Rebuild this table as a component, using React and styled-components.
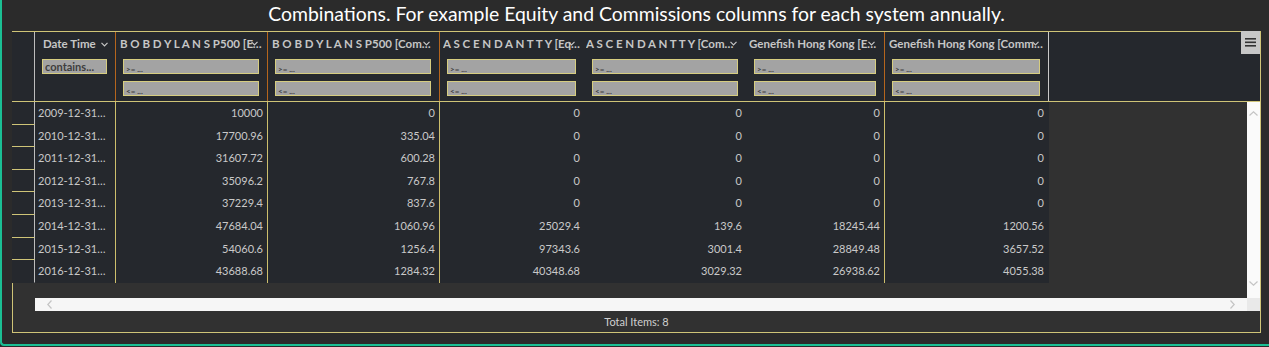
import React from "react"
import styled, { createGlobalStyle } from "styled-components"

const GlobalStyle = createGlobalStyle`
  html, body {
    margin: 0;
    padding: 0;
    background: #2b2b2b;
    font-family: Lato, "Open Sans", sans-serif;
    overflow: hidden;
  }
  * {
    box-sizing: border-box;
  }
`

const Panel = styled.div`
  width: 1269px;
  height: 346px;
  border-left: 2px solid #1bbf93;
  border-bottom: 2px solid #1bbf93;
  border-bottom-left-radius: 4px;
  background: #2b2b2b;
  padding: 0 8px 0 10px;
  display: flex;
  flex-direction: column;
`

const Title = styled.h1`
  margin: 0;
  height: 31px;
  line-height: 28px;
  font-size: 19.4px;
  font-weight: 400;
  color: #ffffff;
  text-align: center;
`

const Grid = styled.div`
  width: 1249px;
  height: 302px;
  border: 1px solid #cfc477;
  background: #313131;
  display: flex;
  flex-direction: column;
`

const HeaderRow = styled.div`
  display: flex;
  height: 70px;
  margin-left: -1px;
  background: #25282d;
  border-bottom: 1px solid #cfc477;
`

const GutterHead = styled.div`
  width: 23px;
  flex: none;
  border-right: 1px solid #bdbdbd;
`

const edgeColors = {
  orange: "#b5651d",
  light: "#c9c9c9",
  none: "transparent",
}

const HeadCell = styled.div`
  position: relative;
  width: ${(p) => p.$w}px;
  flex: none;
  border-right: 1px solid ${(p) => edgeColors[p.$edge]};
  padding: 4px 8px 0 7px;
  display: flex;
  flex-direction: column;
`

const HeadTitle = styled.div`
  height: 16px;
  line-height: 16px;
  margin-left: ${(p) => p.$shift}px;
  margin-right: -4px;
  font-size: 11.5px;
  font-weight: 700;
  color: #c6c6c6;
  white-space: nowrap;
  overflow: hidden;
  text-overflow: ${(p) => (p.$plain ? "clip" : "ellipsis")};
`

const SortMark = styled.svg`
  position: absolute;
  top: ${(p) => p.$top}px;
  right: ${(p) => p.$right}px;
  width: 7px;
  height: 5px;
`

const Filter = styled.input`
  display: block;
  width: 100%;
  height: 15px;
  margin-top: 7px;
  padding: ${(p) => (p.$text ? "0 2px" : "4px 2px 0")};
  border: 1px solid #d6cd80;
  background: #a3a3a3;
  font-family: inherit;
  font-size: ${(p) => (p.$text ? 11 : 8)}px;
  font-weight: 700;
  line-height: 1;
  color: #404040;
  outline: none;

  &::placeholder {
    color: #3e3e3e;
    opacity: 1;
  }
`

const HeadFiller = styled.div`
  flex: 1;
  display: flex;
  justify-content: flex-end;
  align-items: flex-start;
`

const MenuButton = styled.button`
  width: 19px;
  height: 23px;
  margin-top: -1px;
  border: none;
  padding: 0;
  background: #c7c7c7;
  display: flex;
  align-items: center;
  justify-content: center;
`

const Body = styled.div`
  display: grid;
  grid-template-columns: 22px 1fr 13px;
  grid-template-rows: 196px 13px;
`

const Gutter = styled.div`
  grid-row: 1 / 3;
  margin-left: -1px;
  width: 23px;
  display: flex;
  flex-direction: column;
`

const GutterCell = styled.div`
  height: 22.6px;
  flex: none;
  background: #25282d;
  border-right: 1px solid #bdbdbd;
  border-bottom: 1px solid ${(p) => (p.$last ? "#25282d" : "#cfc477")};
`

const Viewport = styled.div`
  display: flex;
  flex-direction: column;
`

const Row = styled.div`
  display: flex;
  height: 22.6px;
  flex: none;
`

const Cell = styled.div`
  width: ${(p) => p.$w}px;
  flex: none;
  background: #25282d;
  border-right: 1px solid ${(p) => (p.$line ? "#cdbf6c" : "#25282d")};
  padding: 0 ${(p) => (p.$left ? 6 : 4)}px 0 3px;
  line-height: 22px;
  font-size: 11px;
  color: #c9c9c9;
  text-align: ${(p) => (p.$left ? "left" : "right")};
  white-space: nowrap;
  overflow: hidden;
  text-overflow: ellipsis;
`

const VScroll = styled.div`
  background: #fafafa;
  display: flex;
  flex-direction: column;
  justify-content: space-between;
  align-items: center;
  padding: 9px 0 12px;
`

const HScroll = styled.div`
  background: #f6f6f6;
  display: flex;
  justify-content: space-between;
  align-items: center;
  padding: 0 12px 0 12px;
`

const Corner = styled.div`
  background: #e9e9e9;
`

const Arrow = styled.svg`
  width: ${(p) => (p.$vertical ? 9 : 5)}px;
  height: ${(p) => (p.$vertical ? 5 : 9)}px;
`

const Footer = styled.div`
  flex: 1;
  display: flex;
  align-items: center;
  justify-content: center;
  font-size: 11px;
  color: #cfcfcf;
  padding-bottom: 1px;
`

const columns = [
  { key: "date", title: "Date Time", w: 81, edge: "orange", shift: 1, left: true, line: true },
  { key: "bobEq", title: "B O B D Y L A N S P500 [Equity]", w: 152, edge: "orange", shift: -3, line: true },
  { key: "bobComm", title: "B O B D Y L A N S P500 [Commissions]", w: 172, edge: "orange", shift: -3, line: true },
  { key: "ascEq", title: "A S C E N D A N T T Y [Equity]", w: 145, edge: "none", shift: -4 },
  { key: "ascComm", title: "A S C E N D A N T T Y [Commissions]", w: 162, edge: "none", shift: -6 },
  { key: "genEq", title: "Genefish Hong Kong [Equity]", w: 138, edge: "orange", shift: -5, line: true },
  { key: "genComm", title: "Genefish Hong Kong [Commissions]", w: 164, edge: "light", shift: -3 },
]

const rows = [
  ["2009-12-31T00:00:00", "10000", "0", "0", "0", "0", "0"],
  ["2010-12-31T00:00:00", "17700.96", "335.04", "0", "0", "0", "0"],
  ["2011-12-31T00:00:00", "31607.72", "600.28", "0", "0", "0", "0"],
  ["2012-12-31T00:00:00", "35096.2", "767.8", "0", "0", "0", "0"],
  ["2013-12-31T00:00:00", "37229.4", "837.6", "0", "0", "0", "0"],
  ["2014-12-31T00:00:00", "47684.04", "1060.96", "25029.4", "139.6", "18245.44", "1200.56"],
  ["2015-12-31T00:00:00", "54060.6", "1256.4", "97343.6", "3001.4", "28849.48", "3657.52"],
  ["2016-12-31T00:00:00", "43688.68", "1284.32", "40348.68", "3029.32", "26938.62", "4055.38"],
]

function Chevron({ right, top }) {
  return (
    <SortMark $right={right} $top={top} viewBox="0 0 7 5">
      <path d="M0.5 0.8 L3.5 3.8 L6.5 0.8" fill="none" stroke="#c6c6c6" strokeWidth="1.2" />
    </SortMark>
  )
}

function ArrowIcon({ dir }) {
  const paths = {
    up: "M0.5 4.5 L4.5 0.8 L8.5 4.5",
    down: "M0.5 0.5 L4.5 4.2 L8.5 0.5",
    left: "M4.5 0.5 L0.8 4.5 L4.5 8.5",
    right: "M0.5 0.5 L4.2 4.5 L0.5 8.5",
  }
  const vertical = dir === "up" || dir === "down"
  return (
    <Arrow $vertical={vertical} viewBox={vertical ? "0 0 9 5" : "0 0 5 9"}>
      <path d={paths[dir]} fill="none" stroke="#c4c4c4" strokeWidth="1.2" />
    </Arrow>
  )
}

export default function App() {
  return (
    <>
      <GlobalStyle />
      <Panel>
        <Title>Combinations. For example Equity and Commissions columns for each system annually.</Title>
        <Grid>
          <HeaderRow>
            <GutterHead />
            {columns.map((col) =>
              col.left ? (
                <HeadCell key={col.key} $w={col.w} $edge={col.edge}>
                  <HeadTitle $plain $shift={col.shift}>
                    {col.title}
                  </HeadTitle>
                  <Chevron right={7} top={10} />
                  <Filter $text placeholder="contains..." />
                </HeadCell>
              ) : (
                <HeadCell key={col.key} $w={col.w} $edge={col.edge}>
                  <HeadTitle $shift={col.shift}>{col.title}</HeadTitle>
                  <Chevron right={9} top={9} />
                  <Filter placeholder=">= ..." />
                  <Filter placeholder="<= ..." />
                </HeadCell>
              )
            )}
            <HeadFiller>
              <MenuButton aria-label="grid menu">
                <svg width="11" height="9" viewBox="0 0 11 9">
                  <rect x="0" y="0" width="11" height="1.6" fill="#333" />
                  <rect x="0" y="3.5" width="11" height="1.6" fill="#333" />
                  <rect x="0" y="7" width="11" height="1.6" fill="#333" />
                </svg>
              </MenuButton>
            </HeadFiller>
          </HeaderRow>
          <Body>
            <Gutter>
              {rows.map((r, i) => (
                <GutterCell key={r[0]} $last={i === rows.length - 1} />
              ))}
            </Gutter>
            <Viewport>
              {rows.map((r) => (
                <Row key={r[0]}>
                  {r.map((v, i) => (
                    <Cell key={columns[i].key} $w={columns[i].w} $left={columns[i].left} $line={columns[i].line}>
                      {v}
                    </Cell>
                  ))}
                </Row>
              ))}
            </Viewport>
            <VScroll>
              <ArrowIcon dir="up" />
              <ArrowIcon dir="down" />
            </VScroll>
            <HScroll>
              <ArrowIcon dir="left" />
              <ArrowIcon dir="right" />
            </HScroll>
            <Corner />
          </Body>
          <Footer>Total Items: 8</Footer>
        </Grid>
      </Panel>
    </>
  )
}
